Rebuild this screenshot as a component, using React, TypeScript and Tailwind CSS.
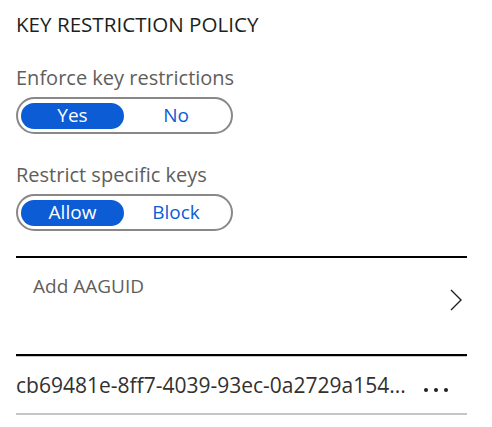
const FONT = "font-['Segoe_UI','Open_Sans',sans-serif]";

function Toggle({ on, off }: { on: string; off: string }) {
  return (
    <div className="flex h-[37px] w-[217px] items-center rounded-full border-2 border-[#8a8886] px-[3px]">
      <div className="flex h-[26px] w-[103px] items-center justify-center rounded-full bg-[#0b5cd5] text-[19px] leading-none text-white">
        {on}
      </div>
      <div className="flex flex-1 items-center justify-center text-[19px] leading-none text-[#0b5cd5]">{off}</div>
    </div>
  );
}

export default function App() {
  return (
    <div className={`h-[427px] w-[492px] bg-white pl-4 ${FONT}`}>
      <div className="w-[451px]">
        <h2 className="pt-[10px] text-[20.6px] leading-[28px] text-[#201f1e]">KEY RESTRICTION POLICY</h2>

        <label className="mt-[26px] block text-[20px] leading-[28px] text-[#605e5c]">Enforce key restrictions</label>
        <div className="mt-[5px]">
          <Toggle on="Yes" off="No" />
        </div>

        <label className="mt-[27px] block text-[20px] leading-[28px] text-[#605e5c]">Restrict specific keys</label>
        <div className="mt-[5px]">
          <Toggle on="Allow" off="Block" />
        </div>

        {/* AAGUID picker */}
        <div className="mt-[25px] flex h-[100px] items-start justify-between border-y-2 border-black">
          <span className="pl-[17px] pt-[14px] text-[19px] leading-[28px] text-[#605e5c]">Add AAGUID</span>
          <svg className="mr-[4px] mt-[31px]" width="14" height="22" viewBox="0 0 14 22" fill="none">
            <path d="M2 1l10 10L2 21" stroke="#201f1e" strokeWidth="1.4" />
          </svg>
        </div>

        {/* AAGUID list */}
        <div className="flex h-[59px] items-center justify-between border-t border-b-2 border-[#c8c6c4]">
          <span className="text-[21px] leading-[28px] text-[#323130]">cb69481e-8ff7-4039-93ec-0a2729a154...</span>
          <span className="mr-[19px] flex gap-[6px] pt-[9px]">
            <i className="block h-[4px] w-[4px] rounded-full bg-[#201f1e]" />
            <i className="block h-[4px] w-[4px] rounded-full bg-[#201f1e]" />
            <i className="block h-[4px] w-[4px] rounded-full bg-[#201f1e]" />
          </span>
        </div>
      </div>
    </div>
  );
}
